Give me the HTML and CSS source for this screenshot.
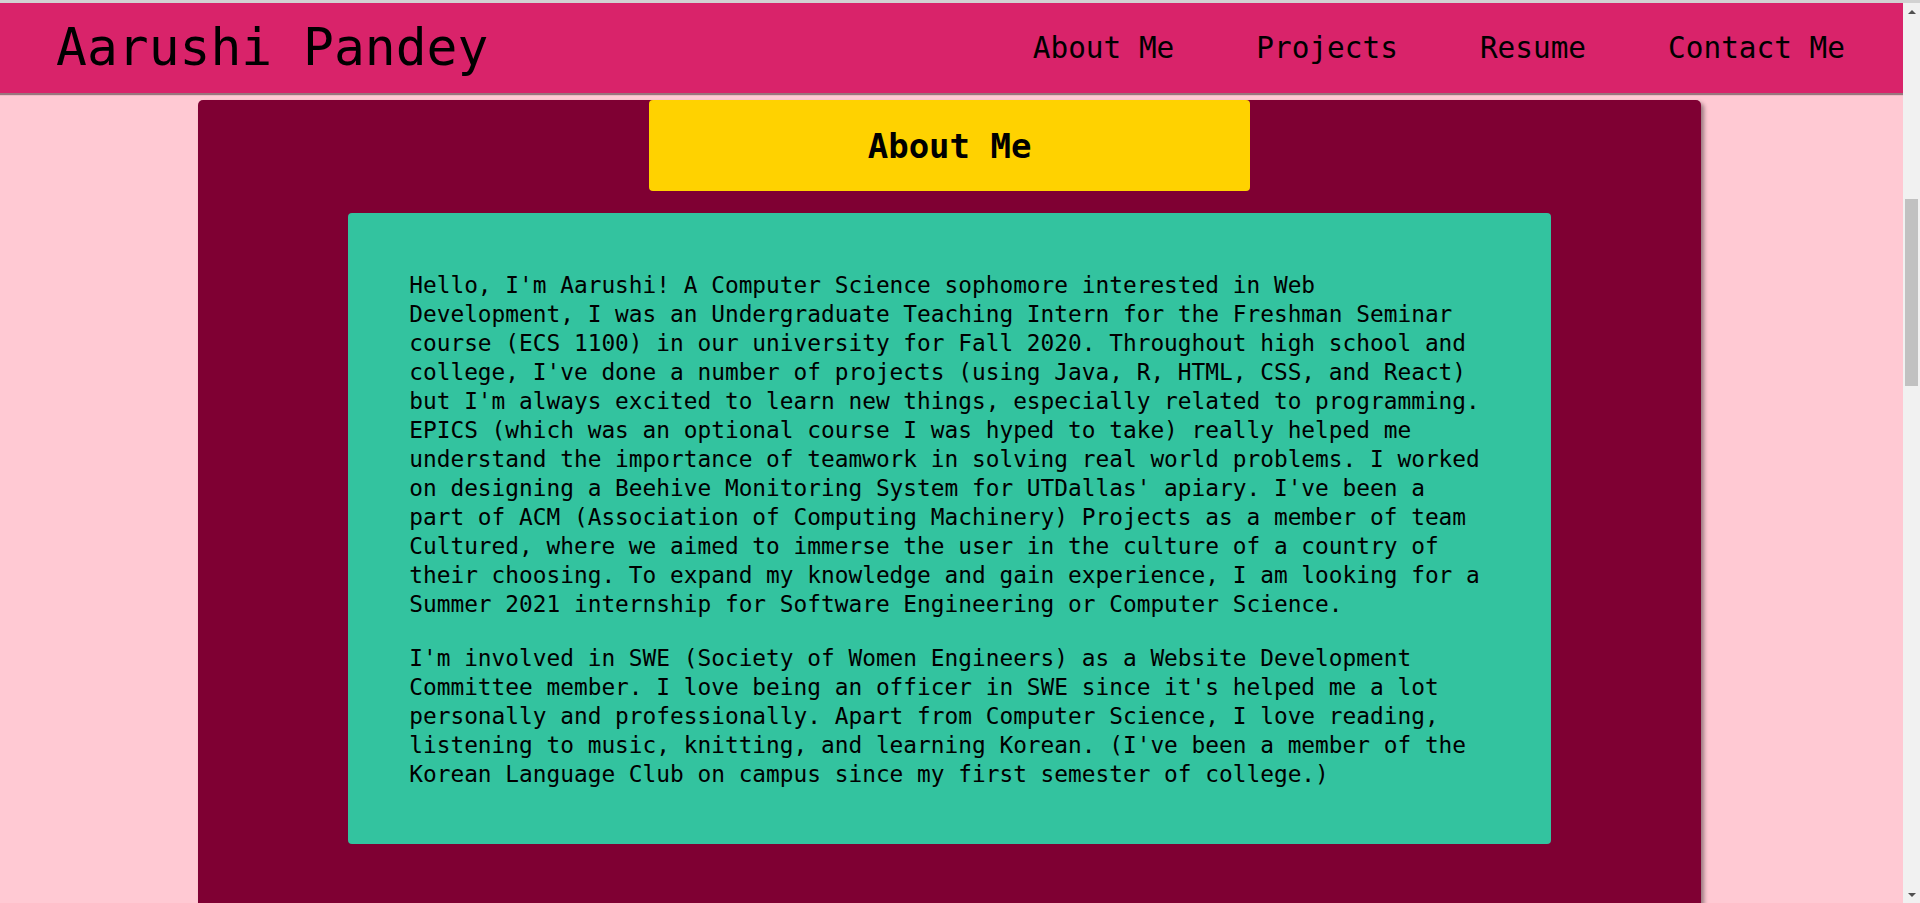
FILE: index.html
```html
<!DOCTYPE html>
<html lang="en">
<head>
<meta charset="utf-8">
<title>Aarushi Pandey</title>
<link rel="stylesheet" href="styles.css">
</head>
<body>
<div class="topline"></div>
<div class="window">
  <div class="page">
    <header class="site-header">
      <div class="brand">Aarushi Pandey</div>
      <nav class="nav">
        <a href="#about">About Me</a>
        <a href="#projects">Projects</a>
        <a href="#resume">Resume</a>
        <a href="#contact">Contact Me</a>
      </nav>
    </header>
    <main class="main">
      <section class="about" id="about">
        <h2 class="about-title">About Me</h2>
        <div class="about-card">
          <div class="about-text">
            <p>Hello, I'm Aarushi! A Computer Science sophomore interested in Web Development, I was an Undergraduate Teaching Intern for the Freshman Seminar course (ECS 1100) in our university for Fall 2020. Throughout high school and college, I've done a number of projects (using Java, R, HTML, CSS, and React) but I'm always excited to learn new things, especially related to programming. EPICS (which was an optional course I was hyped to take) really helped me understand the importance of teamwork in solving real world problems. I worked on designing a Beehive Monitoring System for UTDallas' apiary. I've been a part of ACM (Association of Computing Machinery) Projects as a member of team Cultured, where we aimed to immerse the user in the culture of a country of their choosing. To expand my knowledge and gain experience, I am looking for a Summer 2021 internship for Software Engineering or Computer Science.</p>
            <p>I'm involved in SWE (Society of Women Engineers) as a Website Development Committee member. I love being an officer in SWE since it's helped me a lot personally and professionally. Apart from Computer Science, I love reading, listening to music, knitting, and learning Korean. (I've been a member of the Korean Language Club on campus since my first semester of college.)</p>
          </div>
        </div>
      </section>
    </main>
  </div>
  <div class="scrollbar" aria-hidden="true">
    <div class="sb-btn"><span class="arrow-up"></span></div>
    <div class="sb-track"><div class="sb-thumb"></div></div>
    <div class="sb-btn"><span class="arrow-down"></span></div>
  </div>
</div>
</body>
</html>
```
FILE: styles.css
```css
html, body {
  margin: 0;
  padding: 0;
  height: 903px;
  overflow: hidden;
}
body {
  display: flex;
  flex-direction: column;
  font-family: "DejaVu Sans Mono", "Liberation Mono", monospace;
  color: #000;
  background: #f1f1f1;
}
.topline {
  height: 3px;
  background: #d2d2d2;
  flex: none;
}
.window {
  flex: 1;
  display: flex;
  min-height: 0;
}
.page {
  flex: 1;
  min-width: 0;
  display: flex;
  flex-direction: column;
  background: #ffc9d3;
  overflow: hidden;
}
.site-header {
  flex: none;
  height: 90px;
  background: #d9236a;
  box-shadow: 0 2px 1px rgba(70, 50, 55, 0.55);
  display: flex;
  align-items: center;
  justify-content: space-between;
  padding: 0 58px 0 56px;
  position: relative;
  z-index: 1;
}
.brand {
  font-size: 51.3px;
  line-height: 1;
  color: #000;
}
.nav {
  display: flex;
  gap: 82px;
}
.nav a {
  font-size: 29.4px;
  color: #000;
  text-decoration: none;
}
.main {
  flex: 1;
  padding-top: 7px;
}
.about {
  width: 79%;
  margin: 0 auto 0 10.4%;
  background: #7f0033;
  border-radius: 5px;
  box-shadow: 3px 3px 4px rgba(0, 0, 0, 0.4);
  display: flex;
  flex-direction: column;
  align-items: center;
  padding-bottom: 200px;
}
.about-title {
  width: 40%;
  height: 91px;
  margin: 0;
  background: #ffd200;
  border-radius: 4px;
  display: flex;
  align-items: center;
  justify-content: center;
  font-size: 34px;
  font-weight: bold;
}
.about-card {
  width: 80%;
  margin-top: 22px;
  background: #33c39f;
  border-radius: 4px;
  padding: 58px 0 55px 61px;
  box-sizing: border-box;
}
.about-text {
  width: 1078px;
}
.about-text p {
  margin: 0;
  font-size: 22.8px;
  line-height: 29px;
}
.about-text p + p {
  margin-top: 25px;
}
.scrollbar {
  flex: none;
  width: 17px;
  background: #f1f1f1;
  display: flex;
  flex-direction: column;
}
.sb-btn {
  height: 17px;
  display: flex;
  align-items: center;
  justify-content: center;
  flex: none;
}
.arrow-up {
  width: 0;
  height: 0;
  border-left: 4px solid transparent;
  border-right: 4px solid transparent;
  border-bottom: 4px solid #505050;
}
.arrow-down {
  width: 0;
  height: 0;
  border-left: 4px solid transparent;
  border-right: 4px solid transparent;
  border-top: 4px solid #505050;
}
.sb-track {
  flex: 1;
  padding: 0 2px;
}
.sb-thumb {
  margin-top: 179px;
  height: 187px;
  background: #c1c1c1;
}
```
